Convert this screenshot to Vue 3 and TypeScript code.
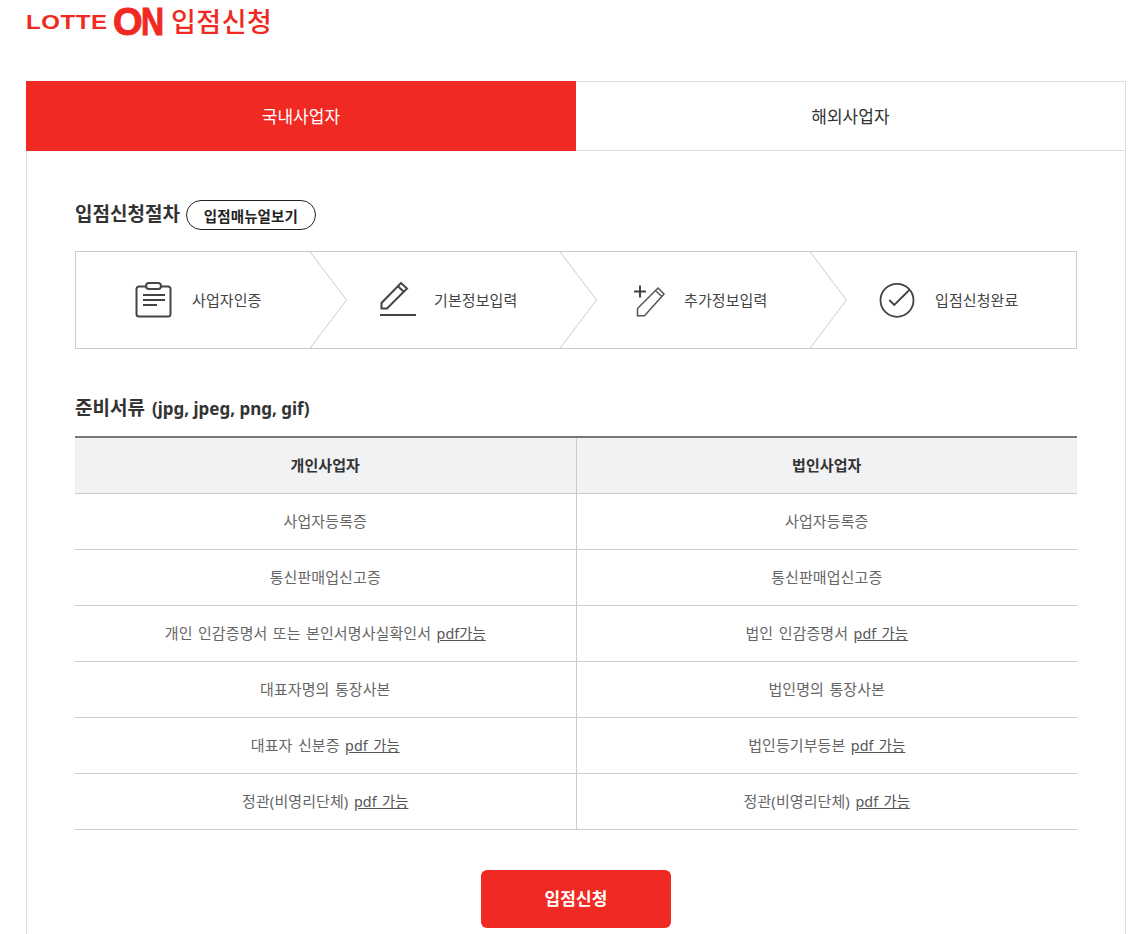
<script setup lang="ts">
interface Step { label: string; icon: string }
const steps: Step[] = [
  { label: '사업자인증', icon: 'clipboard' },
  { label: '기본정보입력', icon: 'pencil' },
  { label: '추가정보입력', icon: 'plus' },
  { label: '입점신청완료', icon: 'check' },
]
interface Cell { text: string; note?: string }
const rows: [Cell, Cell][] = [
  [{ text: '사업자등록증' }, { text: '사업자등록증' }],
  [{ text: '통신판매업신고증' }, { text: '통신판매업신고증' }],
  [{ text: '개인 인감증명서 또는 본인서명사실확인서', note: 'pdf가능' }, { text: '법인 인감증명서', note: 'pdf 가능' }],
  [{ text: '대표자명의 통장사본' }, { text: '법인명의 통장사본' }],
  [{ text: '대표자 신분증', note: 'pdf 가능' }, { text: '법인등기부등본', note: 'pdf 가능' }],
  [{ text: '정관(비영리단체)', note: 'pdf 가능' }, { text: '정관(비영리단체)', note: 'pdf 가능' }],
]
</script>

<template>
  <div class="page">
    <header class="top">
      <span class="brand"><span class="brand-text">LOTTE</span></span>
      <span class="on">O<span class="on-n">N</span></span>
      <h1 class="apply">입점신청</h1>
    </header>

    <main class="panel">
      <nav class="tabs">
        <a class="tab active">국내사업자</a>
        <a class="tab">해외사업자</a>
      </nav>

      <section class="content">
        <div class="title-row">
          <h2 class="title">입점신청절차</h2>
          <button class="pill" type="button">입점매뉴얼보기</button>
        </div>

        <ol class="steps">
          <li v-for="(s, i) in steps" :key="s.label" class="step" :class="s.icon">
            <svg v-if="s.icon === 'clipboard'" class="icon" width="37" height="36" viewBox="0 0 37 36" fill="none" stroke="#444" stroke-width="2">
              <path d="M11 4.500H4a2.500 2.500 0 0 0-2.500 2.500v25a2.500 2.500 0 0 0 2.500 2.500h29a2.500 2.500 0 0 0 2.500-2.500V7a2.500 2.500 0 0 0-2.500-2.500h-7" />
              <rect x="11" y="1" width="15" height="6" rx="3" />
              <path d="M8 13h22M8 18h22M8 23h14" />
            </svg>
            <svg v-else-if="s.icon === 'pencil'" class="icon" width="37" height="36" viewBox="0 0 37 36" fill="none" stroke="#444" stroke-width="2">
              <path d="M1.500 21v5.500h5.500L27 6.500 21 1 1.500 21zM18 4.300l6 5.700" />
              <path d="M0 33h36" />
            </svg>
            <svg v-else-if="s.icon === 'plus'" class="icon" width="34" height="36" viewBox="0 0 34 36" fill="none" stroke="#555" stroke-width="1.500">
              <path d="M1 9.500h12M7 3.500v12" stroke="#444" stroke-width="2" />
              <path d="M4.500 26.500v7.200h7L31 12l-6-6L4.500 26.500zM23 9l6 5.700" />
            </svg>
            <svg v-else class="icon" width="37" height="36" viewBox="0 0 37 36" fill="none" stroke="#444" stroke-width="1.800">
              <circle cx="18" cy="18.300" r="16.500" />
              <path d="M10.300 18l5 5 15-15" />
            </svg>
            <span class="step-label">{{ s.label }}</span>
            <svg v-if="i < 3" class="chevron" width="39" height="98" viewBox="0 0 39 98" fill="none" stroke="#ccc">
              <path d="M0.500 0L37.500 49L0.500 98" />
            </svg>
          </li>
        </ol>

        <h2 class="title docs">준비서류 <span class="latin">(jpg, jpeg, png, gif)</span></h2>

        <table class="docs-table">
          <thead>
            <tr>
              <th>개인사업자</th>
              <th>법인사업자</th>
            </tr>
          </thead>
          <tbody>
            <tr v-for="(r, i) in rows" :key="i">
              <td v-for="(c, j) in r" :key="j">
                {{ c.text }}
                <u v-if="c.note" class="note">{{ c.note }}</u>
              </td>
            </tr>
          </tbody>
        </table>

        <div class="actions">
          <button class="submit" type="button">입점신청</button>
        </div>
      </section>
    </main>
  </div>
</template>

<style>
html, body { margin: 0; background: #fff; }
</style>

<style scoped>
.page {
  width: 1100px;
  margin-left: 26px;
  font-family: "Noto Sans", "Noto Sans CJK KR", sans-serif;
  color: #333;
}
.top {
  display: flex;
  align-items: center;
  height: 44px;
  margin-bottom: 37px;
  color: #f02a22;
}
.brand {
  width: 87px;
}
.brand-text {
  display: inline-block;
  font-family: "Liberation Sans", sans-serif;
  font-weight: 700;
  font-size: 20px;
  letter-spacing: 0.500px;
  transform: scaleX(1.200);
  transform-origin: left center;
}
.on {
  display: inline-flex;
  font-family: "Liberation Sans", sans-serif;
  font-weight: 700;
  font-size: 38px;
  width: 58px;
  -webkit-text-stroke: 1px #f02a22;
}
.on-n {
  display: inline-block;
  margin-left: -2px;
  transform: scaleX(0.840);
  transform-origin: left center;
}
.apply {
  margin: 0;
  font-size: 27px;
  font-weight: 500;
  line-height: 44px;
  letter-spacing: 0.500px;
}
.panel {
  border: 1px solid #ddd;
  border-bottom: 0;
}
.tabs {
  display: grid;
  grid-template-columns: 549px 1fr;
  height: 68px;
  border-bottom: 1px solid #ddd;
}
.tab {
  display: flex;
  align-items: center;
  justify-content: center;
  padding-bottom: 2px;
  font-size: 17px;
  letter-spacing: 0.100px;
  color: #333;
}
.tab.active {
  background: #f02a22;
  color: #fff;
  margin: -1px 0 -1px -1px;
}
.content {
  padding: 48px 48px 40px;
}
.title-row {
  display: flex;
  align-items: center;
  gap: 6px;
  height: 32px;
}
.title {
  margin: 0;
  padding-bottom: 2px;
  font-size: 19px;
  font-weight: 700;
  line-height: 30px;
}
.latin {
  margin-left: 2px;
  font-size: 17px;
}
.pill {
  width: 130px;
  height: 30px;
  border: 1px solid #222;
  border-radius: 15px;
  background: #fff;
  font: 700 14.500px "Noto Sans", "Noto Sans CJK KR", sans-serif;
  letter-spacing: 0.100px;
  color: #222;
  padding: 0;
}
.steps {
  display: grid;
  grid-template-columns: repeat(4, 250px);
  margin: 20px 0 0;
  padding: 0;
  list-style: none;
  border: 1px solid #ccc;
  height: 96px;
}
.step {
  position: relative;
  display: flex;
  align-items: center;
}
.clipboard { padding-left: 59px; gap: 20px; }
.pencil { padding-left: 54px; gap: 17px; }
.plus { padding-left: 57px; gap: 17px; }
.check { padding-left: 53px; gap: 19px; }
.step-label {
  padding-bottom: 2px;
  font-size: 15px;
  letter-spacing: 0.080px;
  color: #444;
}
.chevron {
  position: absolute;
  left: 233px;
  top: -1px;
  z-index: 1;
}
.docs {
  margin-top: 44px;
}
.docs-table {
  width: 100%;
  margin-top: 10px;
  border-collapse: collapse;
  table-layout: fixed;
  border-top: 2px solid #777;
}
.docs-table th,
.docs-table td {
  height: 53px;
  padding: 0 0 2px;
  text-align: center;
  border-bottom: 1px solid #ccc;
  font-size: 15px;
  letter-spacing: 0.080px;
  word-spacing: 1.500px;
}
.docs-table th {
  background: #f1f2f4;
  font-weight: 700;
  color: #333;
}
.docs-table td {
  color: #666;
}
.docs-table th + th,
.docs-table td + td {
  border-left: 1px solid #ccc;
}
.note {
  font-size: 14.300px;
  color: #555;
}
.actions {
  display: flex;
  justify-content: center;
  margin-top: 40px;
}
.submit {
  width: 190px;
  height: 58px;
  padding: 0 0 3px;
  border: 0;
  border-radius: 6px;
  background: #f02a22;
  color: #fff;
  font: 700 17px "Noto Sans", "Noto Sans CJK KR", sans-serif;
  letter-spacing: 0.100px;
}
</style>
